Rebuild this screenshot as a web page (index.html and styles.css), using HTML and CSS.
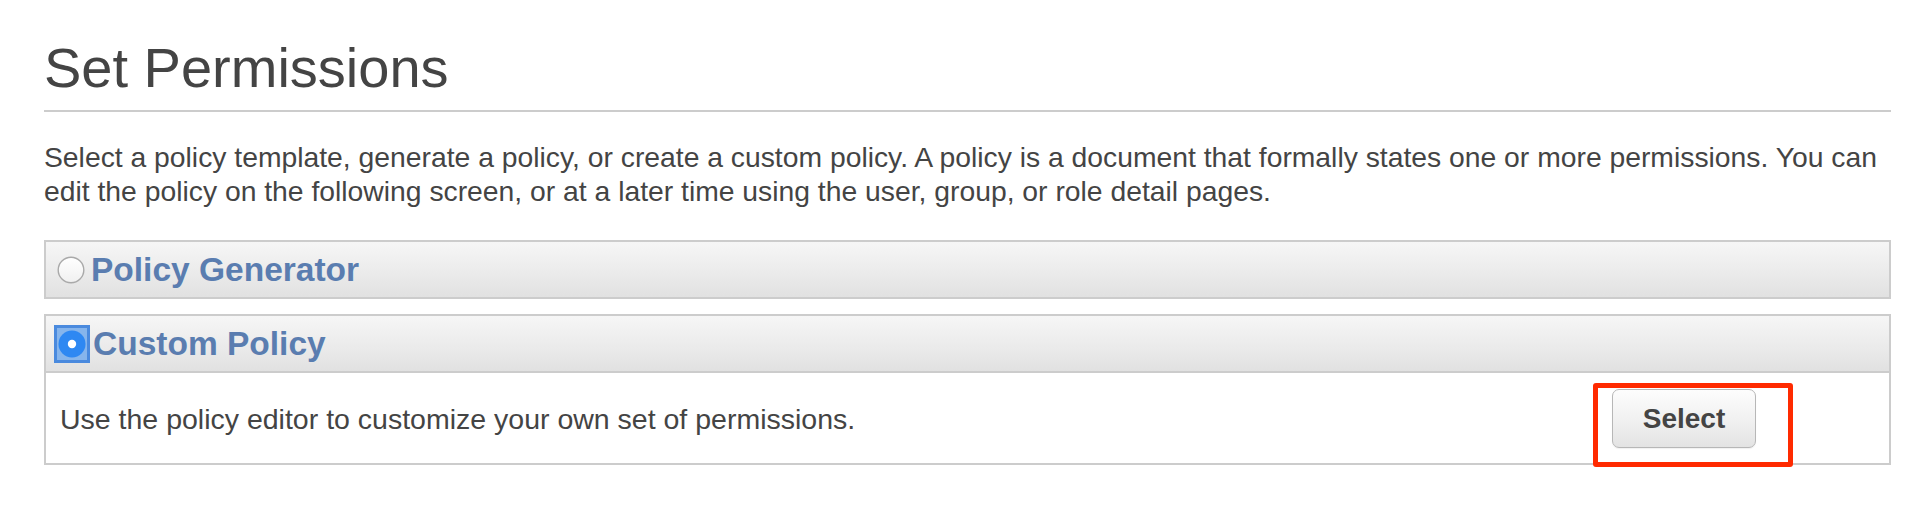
FILE: index.html
```html
<!DOCTYPE html>
<html lang="en">
<head>
<meta charset="utf-8">
<title>Set Permissions</title>
<link rel="stylesheet" href="styles.css">
</head>
<body>
<div class="page">
  <h1 class="title">Set Permissions</h1>
  <p class="intro">Select a policy template, generate a policy, or create a custom policy. A policy is a document that formally states one or more permissions. You can edit the policy on the following screen, or at a later time using the user, group, or role detail pages.</p>

  <div class="panel">
    <div class="panel-head">
      <svg class="radio" width="28" height="28" viewBox="0 0 28 28" aria-hidden="true">
        <defs>
          <linearGradient id="rg" x1="0" y1="0" x2="0" y2="1">
            <stop offset="0" stop-color="#ffffff"/>
            <stop offset="1" stop-color="#f0f0f0"/>
          </linearGradient>
        </defs>
        <circle cx="14" cy="14" r="12.8" fill="url(#rg)" stroke="#a9a9a9" stroke-width="1.4"/>
      </svg>
      <span class="panel-title">Policy Generator</span>
    </div>
  </div>

  <div class="panel">
    <div class="panel-head">
      <svg class="radio radio-on" width="36" height="38" viewBox="0 0 36 38" aria-hidden="true">
        <rect x="1.5" y="1.5" width="33" height="35" fill="#86b5ec" stroke="#4a8ade" stroke-width="3"/>
        <circle cx="18" cy="19" r="13.5" fill="#2e88f2"/>
        <circle cx="18" cy="19" r="4.2" fill="#ffffff"/>
      </svg>
      <span class="panel-title">Custom Policy</span>
    </div>
    <div class="panel-body">
      <span class="body-text">Use the policy editor to customize your own set of permissions.</span>
      <span class="btn-wrap">
        <button class="btn" type="button">Select</button>
        <span class="annot" aria-hidden="true"></span>
      </span>
    </div>
  </div>
</div>
</body>
</html>
```

FILE: styles.css
```css
html, body {
  margin: 0;
  padding: 0;
  background: #ffffff;
}

body {
  font-family: "Liberation Sans", Arial, Helvetica, sans-serif;
  color: #444444;
}

.page {
  width: 1847px;
  padding: 40px 0 0 44px;
}

.title {
  margin: 0;
  font-size: 56px;
  font-weight: normal;
  line-height: 56px;
  color: #444444;
  padding-bottom: 14px;
  border-bottom: 2px solid #cccccc;
}

.intro {
  margin: 28px 0 32px 0;
  font-size: 28.3px;
  line-height: 34px;
  color: #444444;
}

.panel {
  margin-bottom: 15px;
}

.panel-head {
  display: flex;
  align-items: center;
  height: 55px;
  border: 2px solid #cccccc;
  background: linear-gradient(to bottom, #f6f6f6 0%, #eaeaea 60%, #e1e1e1 100%);
  padding-left: 11px;
}

.radio {
  flex: none;
  display: block;
}

.radio-on {
  margin-left: -3px;
  margin-right: -3px;
}

.panel-title {
  margin-left: 6px;
  font-size: 33.5px;
  font-weight: bold;
  line-height: 55px;
  color: #5a7db0;
}

.panel-body {
  display: flex;
  align-items: center;
  justify-content: space-between;
  border: 2px solid #cccccc;
  border-top: none;
  padding: 16px 133px 15px 14px;
}

.body-text {
  font-size: 28.5px;
  line-height: 34px;
  color: #444444;
}

.btn-wrap {
  position: relative;
  display: block;
}

.btn {
  display: block;
  width: 144px;
  height: 59px;
  margin: 0;
  padding: 0;
  border: 1px solid #b7b7b7;
  border-radius: 7px;
  background: linear-gradient(to bottom, #fdfdfd 0%, #f0f0f0 55%, #e3e3e3 100%);
  box-shadow: 0 1px 1px rgba(0, 0, 0, 0.06);
  font-family: "Liberation Sans", Arial, Helvetica, sans-serif;
  font-size: 28px;
  font-weight: bold;
  color: #444444;
}

.annot {
  position: absolute;
  top: -6px;
  left: -19px;
  right: -37px;
  bottom: -19px;
  border: 5px solid #ff2a00;
  border-radius: 3px;
}
```
